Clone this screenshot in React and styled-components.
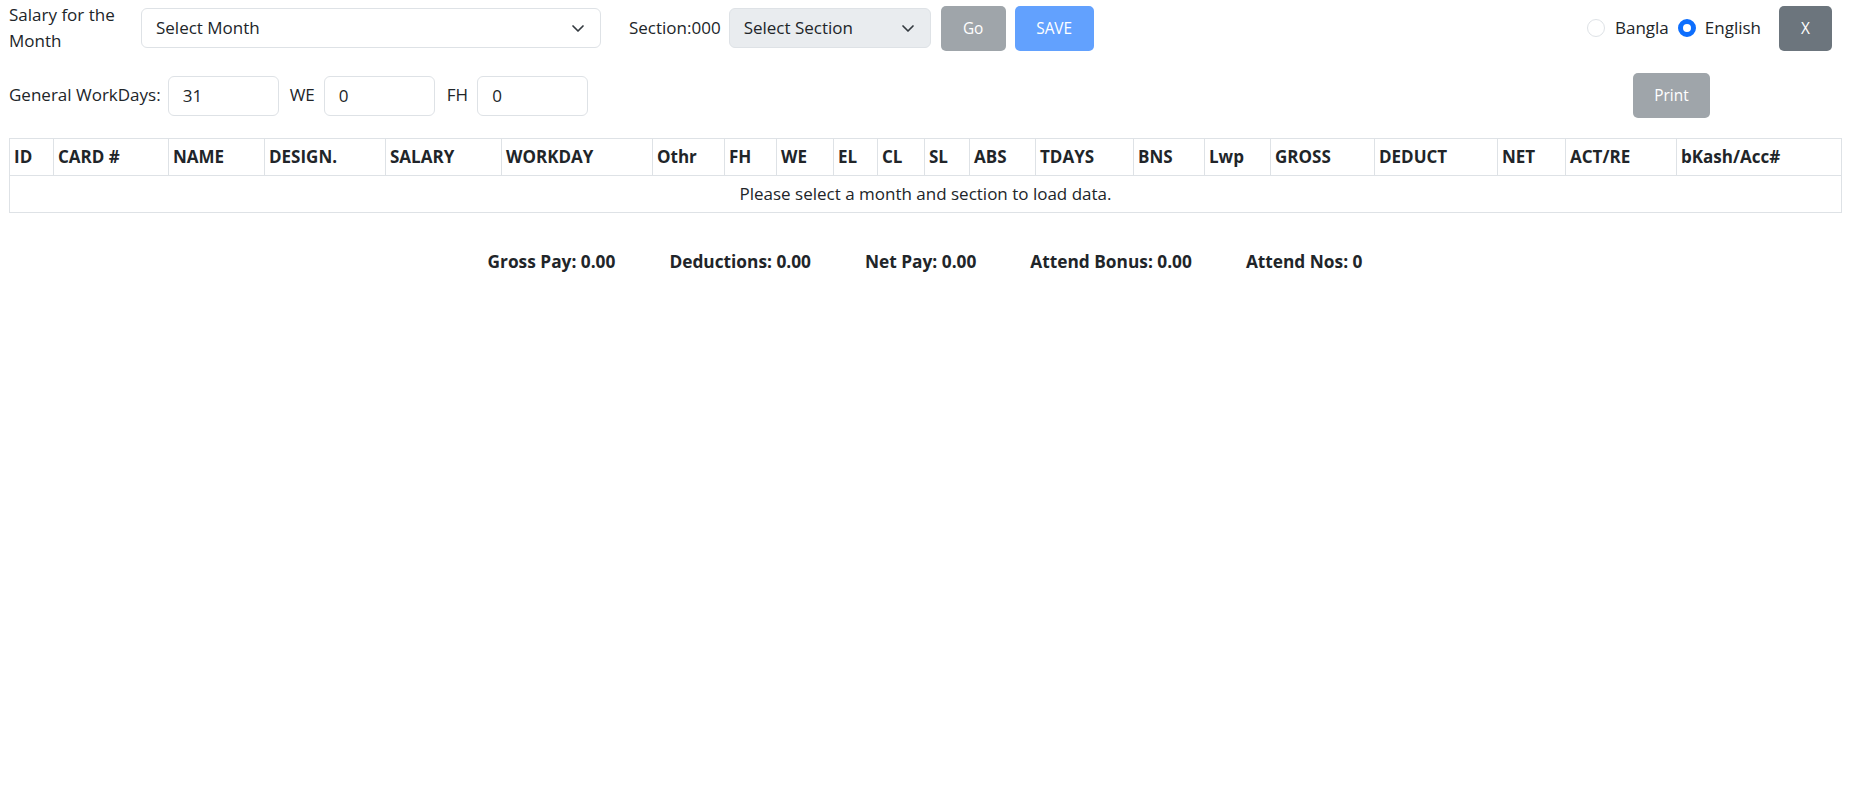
import React from 'react';
import styled, { createGlobalStyle } from 'styled-components';

const GlobalStyle = createGlobalStyle`
  body {
    margin: 0;
    background: #fff;
    color: #212529;
    font-family: "Open Sans", "Noto Sans", sans-serif;
    font-size: 17px;
    line-height: 26.4px;
  }
  * { box-sizing: border-box; }
`;

const Page = styled.div`
  padding: 1px 12px 0 9px;
`;

const TopRow = styled.div`
  display: flex;
  align-items: center;
  height: 54px;
`;

const SecondRow = styled.div`
  display: flex;
  align-items: center;
  height: 45px;
  margin-top: 18px;
`;

const Label = styled.label`
  width: ${p => p.$width || 'auto'};
  margin-left: ${p => p.$left || 0}px;
  margin-right: ${p => p.$right || 0}px;
  white-space: ${p => (p.$wrap ? 'normal' : 'nowrap')};
`;

const SelectBox = styled.div`
  display: flex;
  align-items: center;
  justify-content: space-between;
  width: ${p => p.$width}px;
  height: 40px;
  padding: 0 14px 0 14px;
  border: 1px solid #dee2e6;
  border-radius: 6px;
  background: ${p => (p.$disabled ? '#e9ecef' : '#fff')};
`;

const Chevron = () => (
  <svg width="16" height="16" viewBox="0 0 16 16" fill="none">
    <path d="m3 6 5 5 5-5" stroke="#343a40" strokeWidth="1.7" strokeLinecap="round" strokeLinejoin="round" />
  </svg>
);

const Button = styled.button`
  height: 45px;
  min-width: ${p => p.$width}px;
  margin-left: ${p => p.$left || 0}px;
  padding: 0 12px;
  border: none;
  border-radius: 5px;
  font-family: inherit;
  font-size: 15.4px;
  color: #fff;
  background: ${p => p.$bg};
  cursor: pointer;
`;

const Radios = styled.div`
  display: flex;
  align-items: center;
  margin-left: auto;
`;

const Radio = styled.span`
  width: 18px;
  height: 18px;
  border-radius: 50%;
  margin: 0 ${p => p.$gap}px 0 ${p => p.$lead}px;
  border: ${p => (p.$on ? '5px solid #0d6efd' : '1px solid #dee2e6')};
  background: #fff;
  display: inline-block;
`;

const NumInput = styled.input`
  width: 111px;
  height: 40px;
  padding: 0 14px;
  border: 1px solid #dee2e6;
  border-radius: 6px;
  font-family: inherit;
  font-size: 17px;
  color: #212529;
  margin-right: ${p => p.$right || 0}px;
`;

const Table = styled.table`
  width: 1832px;
  margin-top: 20px;
  border-collapse: collapse;
  table-layout: fixed;
`;

const Th = styled.th`
  text-align: left;
  font-weight: 700;
  padding: 4px;
  height: 37px;
  border: 1px solid #dee2e6;
  white-space: nowrap;
  overflow: hidden;
`;

const Td = styled.td`
  text-align: center;
  padding: 4px;
  height: 37px;
  border: 1px solid #dee2e6;
`;

const Summary = styled.div`
  display: flex;
  justify-content: center;
  gap: 54px;
  margin-top: 36px;
  font-weight: 700;
  font-size: 17.3px;
`;

const columns = [
  ['ID', 44], ['CARD #', 115], ['NAME', 96], ['DESIGN.', 121], ['SALARY', 116],
  ['WORKDAY', 151], ['Othr', 72], ['FH', 52], ['WE', 57], ['EL', 44], ['CL', 47],
  ['SL', 45], ['ABS', 66], ['TDAYS', 98], ['BNS', 71], ['Lwp', 66], ['GROSS', 104],
  ['DEDUCT', 123], ['NET', 68], ['ACT/RE', 111], ['bKash/Acc#', 165],
];

export default function App() {
  return (
    <Page>
      <GlobalStyle />
      <TopRow>
        <Label $width="118px" $right={14} $wrap>Salary for the Month</Label>
        <SelectBox $width={460}>
          <span>Select Month</span>
          <Chevron />
        </SelectBox>
        <Label $left={28} $right={8}>Section:000</Label>
        <SelectBox $width={202} $disabled>
          <span>Select Section</span>
          <Chevron />
        </SelectBox>
        <Button $width={65} $left={10} $bg="#9fa5aa">Go</Button>
        <Button $width={79} $left={9} $bg="#62a1fe">SAVE</Button>
        <Radios>
          <Radio $gap={10} $lead={0} />
          <span>Bangla</span>
          <Radio $on $gap={9} $lead={9} />
          <span>English</span>
        </Radios>
        <Button $width={53} $left={18} $bg="#6c757d" style={{ marginRight: 9 }}>X</Button>
      </TopRow>
      <SecondRow>
        <Label $right={7}>General WorkDays:</Label>
        <NumInput defaultValue="31" $right={11} />
        <Label $right={9}>WE</Label>
        <NumInput defaultValue="0" $right={12} />
        <Label $right={9}>FH</Label>
        <NumInput defaultValue="0" />
        <Button $width={77} $bg="#9fa5aa" style={{ marginLeft: 'auto', marginRight: 131 }}>Print</Button>
      </SecondRow>
      <Table>
        <colgroup>
          {columns.map(([name, w]) => <col key={name} style={{ width: w }} />)}
        </colgroup>
        <thead>
          <tr>
            {columns.map(([name]) => <Th key={name}>{name}</Th>)}
          </tr>
        </thead>
        <tbody>
          <tr>
            <Td colSpan={columns.length}>Please select a month and section to load data.</Td>
          </tr>
        </tbody>
      </Table>
      <Summary>
        <span>Gross Pay: 0.00</span>
        <span>Deductions: 0.00</span>
        <span>Net Pay: 0.00</span>
        <span>Attend Bonus: 0.00</span>
        <span>Attend Nos: 0</span>
      </Summary>
    </Page>
  );
}
